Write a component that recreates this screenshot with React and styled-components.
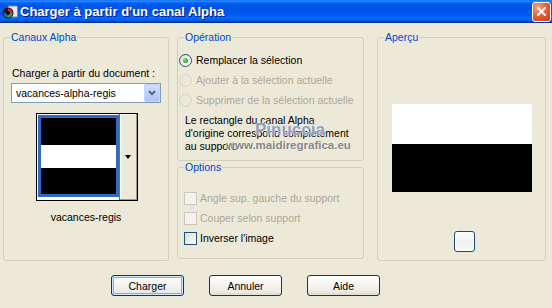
import styled, { createGlobalStyle } from 'styled-components';

const GlobalStyle = createGlobalStyle`
  html, body {
    margin: 0;
    padding: 0;
    background: #ECE9D8;
  }
  body {
    font-family: "Liberation Sans", Arial, sans-serif;
    font-size: 10.5px;
    color: #000;
  }
`;

const Window = styled.div`
  width: 552px;
  height: 308px;
  overflow: hidden;
  background: #ECE9D8;
  display: flex;
  flex-direction: column;
`;

const TitleBar = styled.div`
  flex: none;
  height: 23px;
  display: flex;
  align-items: center;
  gap: 2px;
  padding: 0 1px 0 2px;
  box-sizing: border-box;
  background: linear-gradient(180deg, #0058ee 0%, #3593ff 4%, #288eff 6%, #127dff 8%, #036ffc 10%,
    #0262ee 14%, #0057e5 20%, #0054e3 24%, #0055eb 56%, #005bf5 66%, #026afe 76%,
    #0062ef 86%, #0052d6 92%, #0040ab 94%, #003092 100%);
  color: #fff;
  font: bold 13px "Liberation Sans", Arial, sans-serif;
  text-shadow: 1px 1px 0 #0a1883;
`;

const Title = styled.span`
  line-height: 16px;
  padding-top: 1px;
`;

const CloseButton = styled.div`
  margin-left: auto;
  width: 19px;
  height: 20px;
  box-sizing: border-box;
  border: 1px solid #fff;
  border-radius: 3px;
  background: radial-gradient(circle at 30% 25%, #f5a58a 0%, #e4633f 45%, #c23a1c 100%);
  display: flex;
  align-items: center;
  justify-content: center;
`;

const Body = styled.div`
  padding: 8px 0 0 3px;
`;

const Groups = styled.div`
  display: flex;
  height: 230px;
`;

const Group = styled.fieldset`
  margin: 0;
  padding: 0;
  min-width: 0;
  width: ${p => p.$w}px;
  height: ${p => (p.$h ? `${p.$h}px` : 'auto')};
  box-sizing: border-box;
  border: 1px solid #D0D0BF;
  border-radius: 3px;
  display: flex;
  flex-direction: column;
`;

const Legend = styled.legend`
  color: #0046D5;
  padding: 0 1px;
  margin-left: 6px;
  line-height: 13px;
`;

const Column = styled.div`
  width: 187px;
  margin: 0 13px 0 8px;
  display: flex;
  flex-direction: column;
`;

const LeftContent = styled.div`
  padding: 23px 7px 0;
  display: flex;
  flex-direction: column;
`;

const FieldLabel = styled.div`
  line-height: 13px;
  padding-left: 1px;
`;

const Combo = styled.div`
  margin-top: 3px;
  height: 20px;
  box-sizing: border-box;
  border: 1px solid #7F9DB9;
  background: #fff;
  display: flex;
  align-items: center;
  padding-left: 4px;
`;

const ComboArrow = styled.span`
  margin-left: auto;
  width: 16px;
  height: 18px;
  box-sizing: border-box;
  border: 1px solid #C3D3FD;
  border-radius: 2px;
  background: linear-gradient(180deg, #D2DEFD 0%, #BACDF9 60%, #AFC4F6 100%);
  display: flex;
  align-items: center;
  justify-content: center;
`;

const Thumb = styled.div`
  align-self: center;
  margin: 10px 0 0 1px;
  width: 102px;
  height: 88px;
  box-sizing: border-box;
  border: 1px solid #000;
  background: #fff;
  display: flex;
`;

const ThumbImage = styled.div`
  margin: 1px 0 0 1px;
  width: 81px;
  height: 82px;
  box-sizing: border-box;
  border: 3px solid #316AC5;
  background: linear-gradient(180deg, #000 0 27px, #fff 27px 50px, #000 50px);
`;

const ThumbDrop = styled.div`
  flex: 1;
  background: #ECE9D8;
  border-left: 1px solid #6f6f6f;
  box-shadow: inset -1px -1px 0 #9d9a8c, inset 1px 1px 0 #fff;
  display: flex;
  align-items: center;
  justify-content: center;

  &::after {
    content: "";
    width: 0;
    height: 0;
    border-left: 3px solid transparent;
    border-right: 3px solid transparent;
    border-top: 4px solid #000;
  }
`;

const Caption = styled.div`
  margin-top: 10px;
  line-height: 13px;
  text-align: center;
`;

const OpContent = styled.div`
  padding: 6px 0 0;
  display: flex;
  flex-direction: column;
`;

const Row = styled.div`
  height: 20px;
  display: flex;
  align-items: center;
  color: ${p => (p.$disabled ? '#ACA899' : '#000')};
`;

const Radio = styled.span`
  flex: none;
  width: 13px;
  height: 13px;
  margin: 0 4px 0 1px;
  box-sizing: border-box;
  border-radius: 50%;
  border: 1px solid ${p => (p.$disabled ? '#D6D3C6' : '#1C5180')};
  background: ${p => (p.$disabled
    ? '#EAE8DB'
    : 'linear-gradient(135deg, #DCDCD7 0%, #F4F4F0 60%, #fff 100%)')};
  display: flex;
  align-items: center;
  justify-content: center;

  &::after {
    content: "";
    display: ${p => (p.$checked ? 'block' : 'none')};
    width: 5px;
    height: 5px;
    border-radius: 50%;
    background: radial-gradient(circle at 35% 35%, #8BE58A 0%, #2FB42E 55%, #1A8E19 100%);
  }
`;

const Description = styled.div`
  position: relative;
  margin-top: 4px;
  padding-left: 7px;
  line-height: 13px;
`;

const Watermark = styled.span`
  position: absolute;
  left: ${p => p.$x}px;
  top: ${p => p.$y}px;
  white-space: nowrap;
  font-weight: bold;
  font-size: ${p => p.$size}px;
  line-height: 1;
  color: ${p => p.$color};
  text-shadow: 0 0 2px #ECE9D8, 0 0 1px #fff;
`;

const OptContent = styled.div`
  padding: 14px 0 0 6px;
  display: flex;
  flex-direction: column;
`;

const Check = styled.span`
  flex: none;
  width: 13px;
  height: 13px;
  margin-right: 3px;
  box-sizing: border-box;
  border: 1px solid ${p => (p.$disabled ? '#CAC8BB' : '#1C5180')};
  background: ${p => (p.$disabled
    ? '#F3F2EC'
    : 'linear-gradient(135deg, #DCDCD7 0%, #F0F0EA 55%, #fff 100%)')};
`;

const PreviewContent = styled.div`
  padding-top: 60px;
  display: flex;
  flex-direction: column;
  align-items: center;
`;

const Preview = styled.div`
  width: 140px;
  height: 88px;
  background: linear-gradient(180deg, #fff 0 40px, #000 40px);
`;

const TinyButton = styled.div`
  margin: 39px 0 0 5px;
  width: 21px;
  height: 21px;
  box-sizing: border-box;
  border: 1px solid #1C4A7E;
  border-radius: 3px;
  background: linear-gradient(180deg, #fdfdfd 0%, #f2f2f0 50%, #f8f8f6 100%);
  box-shadow: inset 0 0 0 1px #fff;
`;

const ButtonRow = styled.div`
  display: flex;
  gap: 25px;
  padding: 14px 0 0 108px;
`;

const Button = styled.button`
  width: 73px;
  height: 21px;
  padding: 0;
  font: 10.5px "Liberation Sans", Arial, sans-serif;
  color: #000;
  border: 1px solid #003C74;
  border-radius: 3px;
  background: linear-gradient(180deg, #fff 0%, #F3F2ED 50%, #ECEBE6 85%, #D6D0C5 100%);
  box-shadow: ${p => (p.$default
    ? 'inset 0 0 0 1px #CEE7FF, inset 0 0 0 2px #8CA9EC'
    : 'inset 0 -1px 0 #E3DFD5')};
`;

const AppIcon = () => (
  <svg width="16" height="16" viewBox="0 0 16 16">
    <rect x="6" y="2" width="9.5" height="11" rx="1" fill="#e8e8e8" stroke="#7a8aa0" />
    <circle cx="6" cy="9" r="5.5" fill="#1b1b22" />
    <path d="M6 4.5 A4.5 4.5 0 0 1 10.5 9 L6 9 Z" fill="#c0303a" />
    <path d="M10.5 9 A4.5 4.5 0 0 1 6 13.5 L6 9 Z" fill="#2fa83a" />
    <path d="M6 13.5 A4.5 4.5 0 0 1 1.5 9 L6 9 Z" fill="#2a66d0" />
    <circle cx="6" cy="9" r="2" fill="#111" />
  </svg>
);

const CloseIcon = () => (
  <svg width="9" height="9" viewBox="0 0 9 9">
    <path d="M1 1 L8 8 M8 1 L1 8" stroke="#fff" strokeWidth="2" strokeLinecap="square" />
  </svg>
);

const Chevron = () => (
  <svg width="8" height="6" viewBox="0 0 8 6">
    <path d="M1 1.2 L4 4.2 L7 1.2" fill="none" stroke="#4D6185" strokeWidth="2" />
  </svg>
);

export default function App() {
  return (
    <Window>
      <GlobalStyle />
      <TitleBar>
        <AppIcon />
        <Title>Charger à partir d'un canal Alpha</Title>
        <CloseButton><CloseIcon /></CloseButton>
      </TitleBar>
      <Body>
        <Groups>
          <Group $w={166}>
            <Legend>Canaux Alpha</Legend>
            <LeftContent>
              <FieldLabel>Charger à partir du document :</FieldLabel>
              <Combo>
                vacances-alpha-regis
                <ComboArrow><Chevron /></ComboArrow>
              </Combo>
              <Thumb>
                <ThumbImage />
                <ThumbDrop />
              </Thumb>
              <Caption>vacances-regis</Caption>
            </LeftContent>
          </Group>
          <Column>
            <Group $w={187} $h={130}>
              <Legend>Opération</Legend>
              <OpContent>
                <Row><Radio $checked />Remplacer la sélection</Row>
                <Row $disabled><Radio $disabled />Ajouter à la sélection actuelle</Row>
                <Row $disabled><Radio $disabled />Supprimer de la sélection actuelle</Row>
                <Description>
                  Le rectangle du canal Alpha<br />
                  d'origine correspond complètement<br />
                  au support.
                  <Watermark $x={77} $y={7} $size={17} $color="rgba(130, 144, 192, 0.85)">Pinuccia</Watermark>
                  <Watermark $x={48} $y={26} $size={11.5} $color="rgba(120, 120, 126, 0.9)">www.maidiregrafica.eu</Watermark>
                </Description>
              </OpContent>
            </Group>
            <Group $w={187} $h={98}>
              <Legend>Options</Legend>
              <OptContent>
                <Row $disabled><Check $disabled />Angle sup. gauche du support</Row>
                <Row $disabled><Check $disabled />Couper selon support</Row>
                <Row><Check />Inverser l'image</Row>
              </OptContent>
            </Group>
          </Column>
          <Group $w={169}>
            <Legend>Aperçu</Legend>
            <PreviewContent>
              <Preview />
              <TinyButton />
            </PreviewContent>
          </Group>
        </Groups>
        <ButtonRow>
          <Button $default>Charger</Button>
          <Button>Annuler</Button>
          <Button>Aide</Button>
        </ButtonRow>
      </Body>
    </Window>
  );
}
